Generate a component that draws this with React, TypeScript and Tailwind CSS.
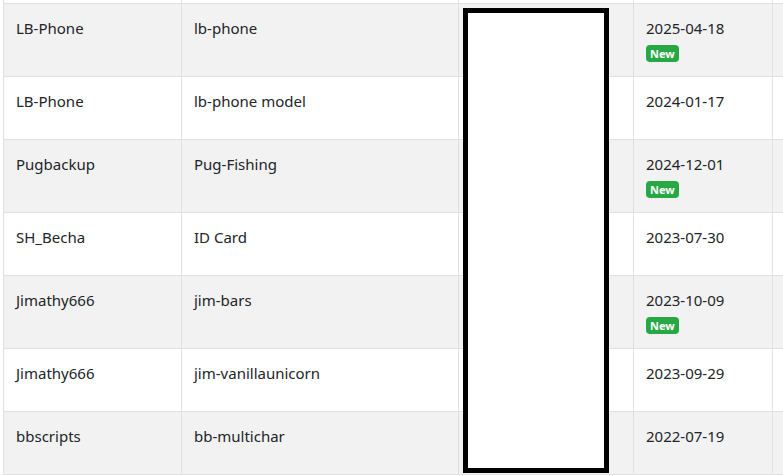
const rows = [
  { author: "LB-Phone", name: "lb-phone", date: "2025-04-18", isNew: true },
  { author: "LB-Phone", name: "lb-phone model", date: "2024-01-17", isNew: false },
  { author: "Pugbackup", name: "Pug-Fishing", date: "2024-12-01", isNew: true },
  { author: "SH_Becha", name: "ID Card", date: "2023-07-30", isNew: false },
  { author: "Jimathy666", name: "jim-bars", date: "2023-10-09", isNew: true },
  { author: "Jimathy666", name: "jim-vanillaunicorn", date: "2023-09-29", isNew: false },
  { author: "bbscripts", name: "bb-multichar", date: "2022-07-19", isNew: false },
];

const gridCols = "grid grid-cols-[178px_277px_175px_139px_120px]";
const cell = "border-l border-[#dee2e6] px-3 pt-3";

const App = () => {
  return (
    <div
      className="relative h-[476px] w-[783px] overflow-hidden bg-white pl-[3px] text-[#212529]"
      style={{ fontFamily: '"Noto Sans", "Open Sans", sans-serif' }}
    >
      {/* tail of the row above */}
      <div className={`${gridCols} h-[3px]`}>
        {[0, 1, 2, 3, 4].map((i) => (
          <div key={i} className="border-l border-[#dee2e6]" />
        ))}
      </div>

      {rows.map((row, i) => (
        <div
          key={i}
          className={`${gridCols} border-t border-[#dee2e6] ${
            row.isNew ? "h-[73px]" : "h-[63px]"
          } ${i % 2 === 0 ? "bg-[#f2f2f2]" : "bg-white"}`}
        >
          <div className={`${cell} text-[15px] leading-6`}>{row.author}</div>
          <div className={`${cell} text-[15px] leading-6`}>{row.name}</div>
          <div className={cell} />
          <div className={`${cell} text-[15px] leading-6`}>
            <div>{row.date}</div>
            {row.isNew && (
              <span className="mt-1 inline-flex h-[17px] items-center rounded-[4px] bg-[#28a745] px-[4px] text-[11px] font-bold leading-none text-white">
                New
              </span>
            )}
          </div>
          <div className={cell} />
        </div>
      ))}
      <div className="h-px w-[900px] bg-[#dee2e6]" />

      {/* redaction box */}
      <div className="absolute left-[463px] top-[8px] h-[465px] w-[146px] border-[5px] border-black bg-white" />
    </div>
  );
};

export default App;
